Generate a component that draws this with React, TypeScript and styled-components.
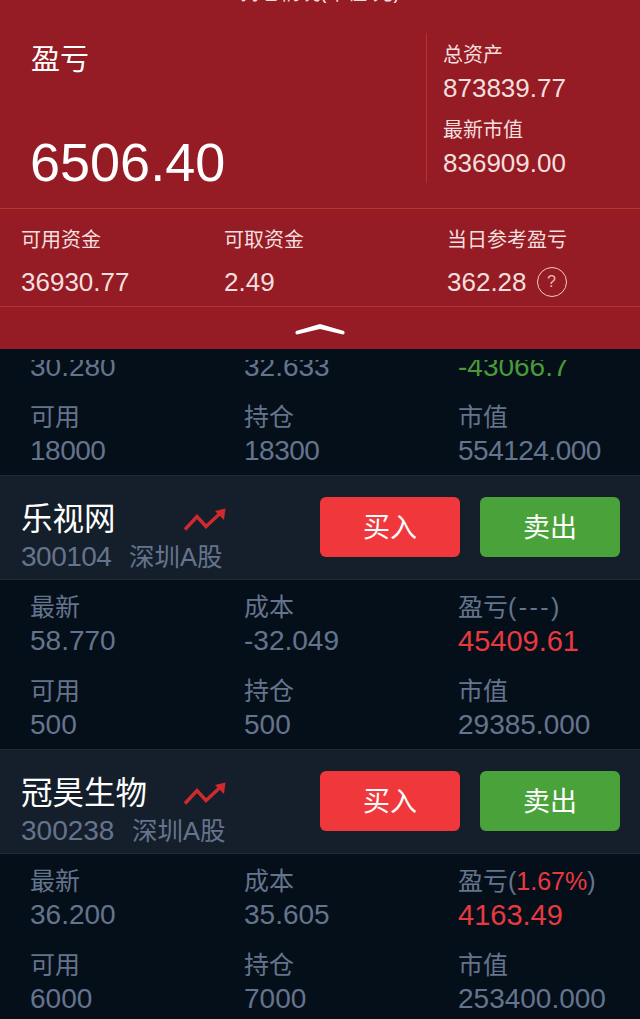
import React from "react";
import styled, { createGlobalStyle } from "styled-components";

const Global = createGlobalStyle`
  html, body { margin: 0; padding: 0; background: #050f1a; }
  body { font-family: "Liberation Sans", "Noto Sans CJK SC", sans-serif; width: 640px; height: 1019px; overflow: hidden; }
  * { box-sizing: border-box; }
`;
const Page = styled.div`width: 640px; height: 1019px; overflow: hidden; background: #050f1a; display: flex; flex-direction: column;`;
const Panel = styled.section`height: 349px; background: #951c24; color: #fff; display: flex; flex-direction: column; flex: none;`;
const ClippedTitle = styled.div`
  height: 3px; overflow: hidden; display: flex; justify-content: center; align-items: flex-end;
  font-size: 20px; line-height: 20px; color: #f3dcdc; white-space: nowrap;
`;
const Summary = styled.div`height: 206px; display: flex; padding: 30px 0 25px; border-bottom: 1px solid #b4342f; flex: none;`;
const ProfitBlock = styled.div`width: 426px; padding: 8px 0 0 30px; display: flex; flex-direction: column; justify-content: space-between;`;
const ProfitLabel = styled.div`font-size: 29px; line-height: 38px; padding-left: 1px;`;
const ProfitValue = styled.div`font-size: 54px; line-height: 62px; margin-bottom: -10px;`;
const Totals = styled.div`flex: 1; border-left: 1px solid #b4342f; padding: 7px 0 0 16px; display: flex; flex-direction: column;`;
const TotalLabel = styled.div`font-size: 20px; line-height: 30px; color: #f4dfdf;`;
const TotalValue = styled.div`font-size: 26px; line-height: 32px; margin: 2px 0 11px; color: #f4dfdf;`;
const Stats = styled.div`height: 98px; display: grid; grid-template-columns: 203px 223px 1fr; padding: 15px 0 0 21px; border-bottom: 1px solid #b4342f; flex: none;`;
const StatLabel = styled.div`font-size: 20px; line-height: 32px; color: #f4dfdf;`;
const StatValue = styled.div`font-size: 26px; line-height: 32px; margin-top: 10px; color: #f4dfdf; display: flex; align-items: center; gap: 10px;`;
const HelpBadge = styled.span`width: 30px; height: 30px; border-radius: 50%; border: 1px solid #f0c9c9; font-size: 16px; display: inline-flex; align-items: center; justify-content: center; color: #e9b9b9;`;
const Collapse = styled.div`flex: 1; display: flex; justify-content: center; align-items: flex-start; padding-top: 17px;`;

const Scrolled = styled.div`padding: 11px 0 0; flex: none; height: 126px;`;
const Grid = styled.div<{ $rowGap?: number }>`display: grid; grid-template-columns: 214px 214px 1fr; padding-left: 30px; row-gap: ${(p) => p.$rowGap ?? 16}px;`;
const Cell = styled.div`display: flex; flex-direction: column;`;
const Label = styled.div`font-size: 25px; line-height: 34px; color: #65748d; white-space: nowrap;`;
const Value = styled.div<{ $tone?: "red" | "green"; $tight?: boolean }>`
  font-size: ${(p) => (p.$tone === "red" ? 29 : 28)}px; line-height: 34px; white-space: nowrap;
  letter-spacing: ${(p) => (p.$tight ? "-0.5px" : "0")};
  color: ${(p) => (p.$tone === "red" ? "#e8393f" : p.$tone === "green" ? "#4a9a38" : "#65748d")};
`;
const ClipValue = styled(Value)`height: 17px; overflow: hidden; display: flex; align-items: flex-end;`;
const ClipInner = styled.span`display: block; margin-bottom: -7px;`;
const Red = styled.span`color: #e8393f;`;
const Dashes = styled.span`letter-spacing: 2.4px;`;

const StockHeader = styled.div`
  height: 105px; background: #151f2b; display: flex; align-items: center; justify-content: space-between;
  padding: 0 20px 0 21px; border-top: 1px solid #1f2a36; border-bottom: 1px solid #1f2a36; flex: none;
`;
const StockInfo = styled.div`display: flex; flex-direction: column; gap: 3px; padding-top: 16px;`;
const NameRow = styled.div`display: flex; align-items: center; justify-content: space-between; width: 205px;`;
const Name = styled.div`font-size: 31.5px; line-height: 40px; color: #fff;`;
const CodeRow = styled.div`display: flex; gap: 17.5px; font-size: 25.5px; line-height: 30px; color: #65748d;`;
const Code = styled.span<{ $tight?: boolean }>`font-size: 28px; letter-spacing: ${(p) => (p.$tight ? "-0.5px" : "0")};`;
const Actions = styled.div`display: flex; gap: 20px; margin-top: -2px;`;
const TradeButton = styled.button<{ $kind: "buy" | "sell" }>`
  width: 140px; height: 60px; border: 0; border-radius: 6px; color: #fff; font: inherit; font-size: 27px; padding: 0 0 2px;
  background: ${(p) => (p.$kind === "buy" ? "#f0383c" : "#4aa33a")};
`;
const Section = styled.div`padding: 10px 0 8px; height: 169px; flex: none;`;

const Trend = () => (
  <svg width="42" height="24" viewBox="0 0 42 24" fill="none">
    <path d="M1 22.500 L13 9.500 L22 19.500 L37 5.500" stroke="#d02a2e" strokeWidth="3.400" />
    <path d="M31 4 L41.500 1.500 L40 13 Z" fill="#d02a2e" />
  </svg>
);

const Metric = ({ label, value, tone, tight }: { label: React.ReactNode; value: string; tone?: "red" | "green"; tight?: boolean }) => (
  <Cell>
    <Label>{label}</Label>
    <Value $tone={tone} $tight={tight}>{value}</Value>
  </Cell>
);

const Stock = ({ name, code, market, tight }: { name: string; code: string; market: string; tight?: boolean }) => (
  <StockHeader>
    <StockInfo>
      <NameRow><Name>{name}</Name><Trend /></NameRow>
      <CodeRow><Code $tight={tight}>{code}</Code><span>{market}</span></CodeRow>
    </StockInfo>
    <Actions>
      <TradeButton $kind="buy">买入</TradeButton>
      <TradeButton $kind="sell">卖出</TradeButton>
    </Actions>
  </StockHeader>
);

export default function App() {
  return (
    <Page>
      <Global />
      <Panel>
        <ClippedTitle>持仓情况(单位:元)</ClippedTitle>
        <Summary>
          <ProfitBlock>
            <ProfitLabel>盈亏</ProfitLabel>
            <ProfitValue>6506.40</ProfitValue>
          </ProfitBlock>
          <Totals>
            <TotalLabel>总资产</TotalLabel>
            <TotalValue>873839.77</TotalValue>
            <TotalLabel>最新市值</TotalLabel>
            <TotalValue>836909.00</TotalValue>
          </Totals>
        </Summary>
        <Stats>
          <div><StatLabel>可用资金</StatLabel><StatValue>36930.77</StatValue></div>
          <div><StatLabel>可取资金</StatLabel><StatValue>2.49</StatValue></div>
          <div><StatLabel>当日参考盈亏</StatLabel><StatValue>362.28<HelpBadge>?</HelpBadge></StatValue></div>
        </Stats>
        <Collapse>
          <svg width="50" height="11" viewBox="0 0 50 11"><path d="M1 7 L25 0 L49 7 Q50.500 10 48 10.500 L25 5 L2 10.500 Q-0.500 10 1 7 Z" fill="#fff" /></svg>
        </Collapse>
      </Panel>
      <Scrolled>
        <Grid $rowGap={23}>
          <ClipValue><ClipInner>30.280</ClipInner></ClipValue>
          <ClipValue><ClipInner>32.633</ClipInner></ClipValue>
          <ClipValue $tone="green"><ClipInner>-43066.7</ClipInner></ClipValue>
          <Metric label="可用" value="18000" tight />
          <Metric label="持仓" value="18300" tight />
          <Metric label="市值" value="554124.000" tight />
        </Grid>
      </Scrolled>
      <Stock name="乐视网" code="300104" market="深圳A股" tight />
      <Section>
        <Grid>
          <Metric label="最新" value="58.770" />
          <Metric label="成本" value="-32.049" />
          <Metric label={<>盈亏<Dashes>(---)</Dashes></>} value="45409.61" tone="red" />
          <Metric label="可用" value="500" />
          <Metric label="持仓" value="500" />
          <Metric label="市值" value="29385.000" />
        </Grid>
      </Section>
      <Stock name="冠昊生物" code="300238" market="深圳A股" />
      <Section>
        <Grid>
          <Metric label="最新" value="36.200" />
          <Metric label="成本" value="35.605" />
          <Metric label={<>盈亏(<Red>1.67%</Red>)</>} value="4163.49" tone="red" />
          <Metric label="可用" value="6000" />
          <Metric label="持仓" value="7000" />
          <Metric label="市值" value="253400.000" />
        </Grid>
      </Section>
    </Page>
  );
}
